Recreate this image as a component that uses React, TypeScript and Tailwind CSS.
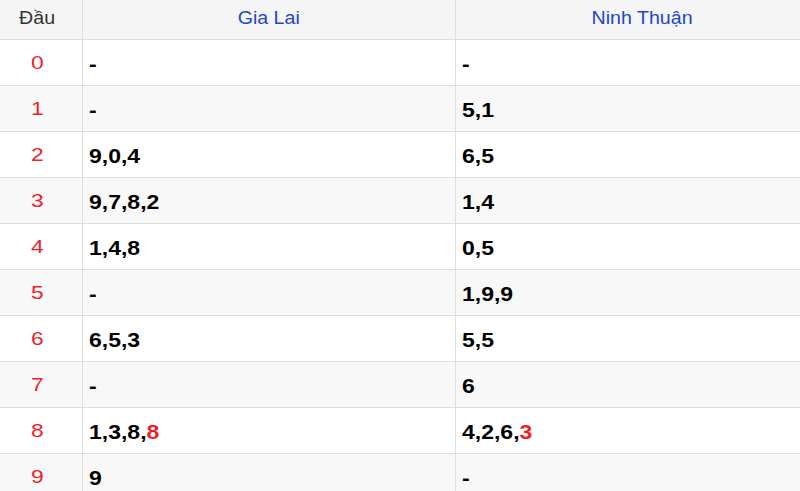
import React from "react";

type Part = { t: string; red?: boolean };
const rows: { d: string; a: Part[]; b: Part[] }[] = [
  { d: "0", a: [{ t: "-" }], b: [{ t: "-" }] },
  { d: "1", a: [{ t: "-" }], b: [{ t: "5,1" }] },
  { d: "2", a: [{ t: "9,0,4" }], b: [{ t: "6,5" }] },
  { d: "3", a: [{ t: "9,7,8,2" }], b: [{ t: "1,4" }] },
  { d: "4", a: [{ t: "1,4,8" }], b: [{ t: "0,5" }] },
  { d: "5", a: [{ t: "-" }], b: [{ t: "1,9,9" }] },
  { d: "6", a: [{ t: "6,5,3" }], b: [{ t: "5,5" }] },
  { d: "7", a: [{ t: "-" }], b: [{ t: "6" }] },
  { d: "8", a: [{ t: "1,3,8," }, { t: "8", red: true }], b: [{ t: "4,2,6," }, { t: "3", red: true }] },
  { d: "9", a: [{ t: "9" }], b: [{ t: "-" }] },
];

function Cell({ parts }: { parts: Part[] }) {
  return (
    <div className="flex items-center pl-[6px] pt-[3px] border-r border-[#dedede] text-[20px] font-bold text-black">
      <span className="inline-block origin-left scale-x-[1.15] whitespace-nowrap">
        {parts.map((p, i) => (
          <span key={i} className={p.red ? "text-[#ef1f2a]" : ""}>
            {p.t}
          </span>
        ))}
      </span>
    </div>
  );
}

export default function App() {
  return (
    <div className="w-[800px] h-[491px] overflow-hidden bg-white font-['Liberation_Sans',Arial,sans-serif]">
      <div className="w-[829px]">
        <div className="grid grid-cols-[83px_373px_373px] h-[40px] bg-[#f5f5f5] border-b border-[#dedede]">
          <div className="flex items-center justify-center pr-[8px] pb-[2px] border-r border-[#dedede] text-[17.5px] text-[#333]">
            <span className="inline-block scale-x-[1.12]">Đầu</span>
          </div>
          <div className="flex items-center justify-center pb-[2px] border-r border-[#dedede] text-[17.5px] text-[#2146c6]">
            <span className="inline-block scale-x-[1.12]">Gia Lai</span>
          </div>
          <div className="flex items-center justify-center pb-[2px] text-[17.5px] text-[#2146c6]">
            <span className="inline-block scale-x-[1.12]">Ninh Thuận</span>
          </div>
        </div>
        {rows.map((r, i) => (
          <div
            key={r.d}
            className={`grid grid-cols-[83px_373px_373px] h-[46px] border-b border-[#dedede] ${
              i % 2 === 1 ? "bg-[#f8f8f8]" : "bg-white"
            }`}
          >
            <div className="flex items-center justify-center pr-[8px] pt-[2px] border-r border-[#dedede] text-[19px] text-[#ef1f2a]">
              <span className="inline-block scale-x-[1.2]">{r.d}</span>
            </div>
            <Cell parts={r.a} />
            <Cell parts={r.b} />
          </div>
        ))}
      </div>
    </div>
  );
}
